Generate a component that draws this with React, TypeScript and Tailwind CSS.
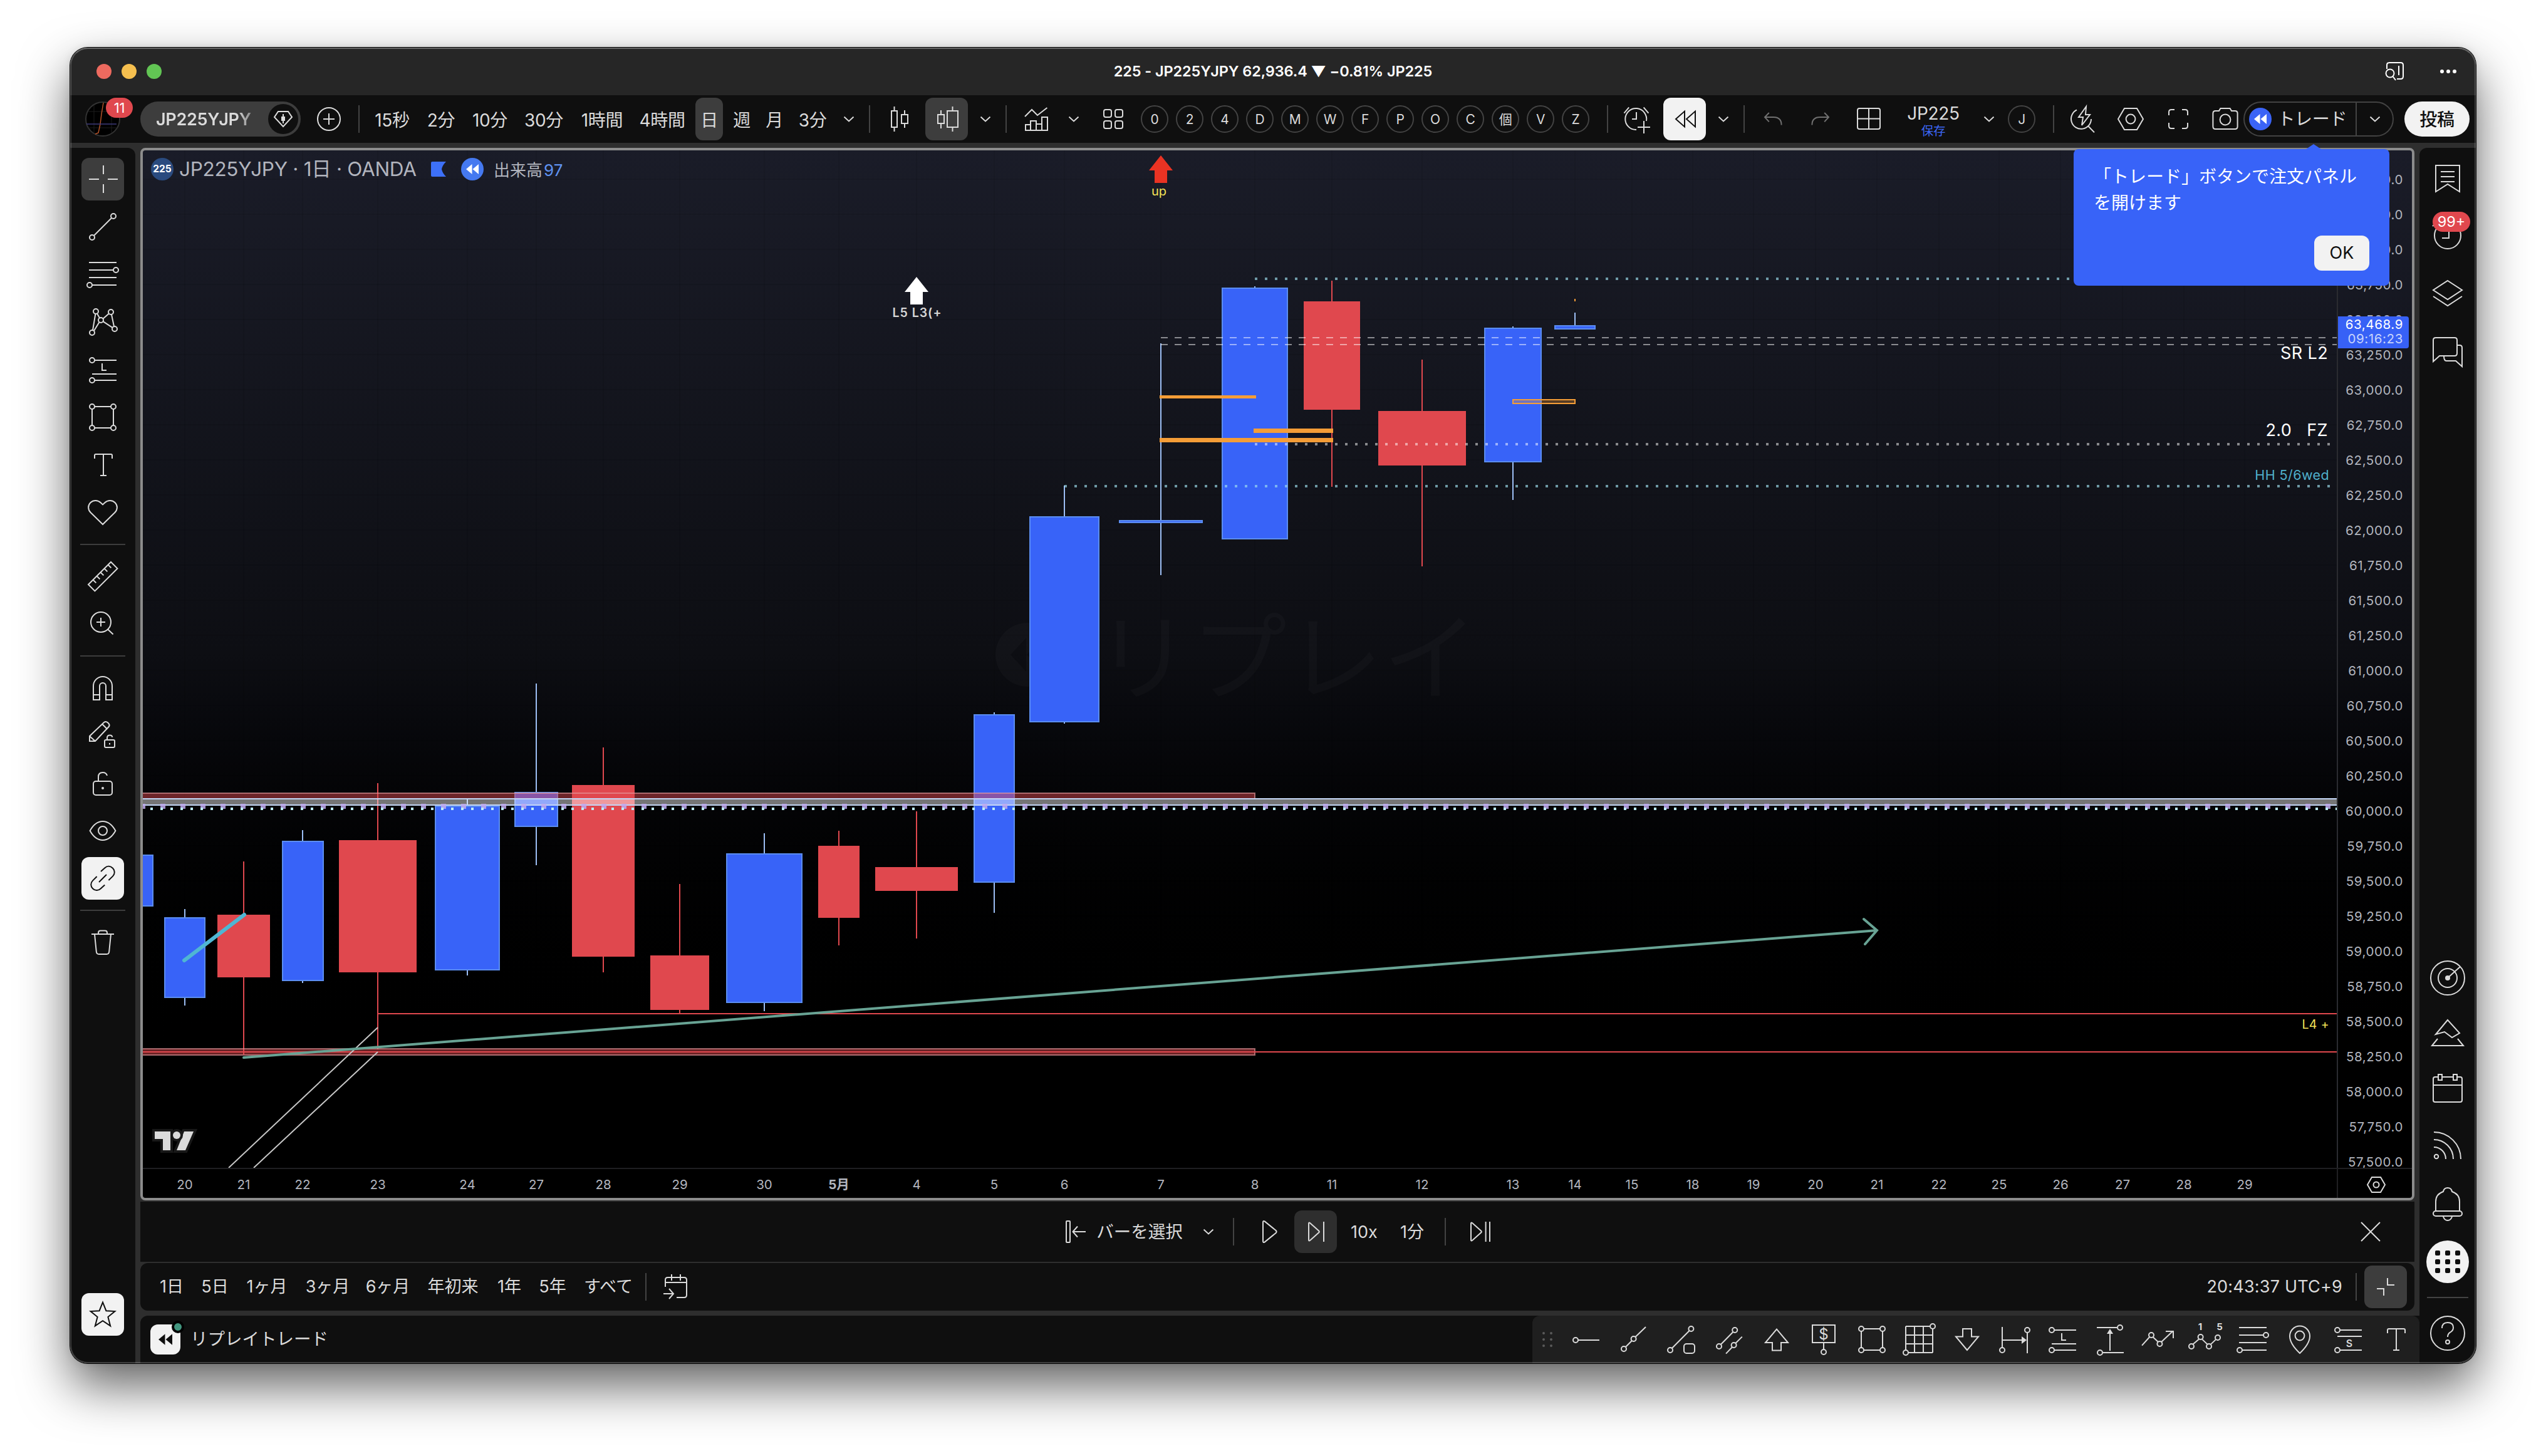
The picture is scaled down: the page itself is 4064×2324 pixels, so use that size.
import type { ReactNode } from "react";
import clsx from "clsx";

type IconProps = { children: ReactNode; className?: string };

// All tool icons share a 28x28 grid with a one-unit stroke
function Icon({ children, className }: IconProps) {
  return (
    <svg
      viewBox="0 0 28 28"
      fill="none"
      stroke="currentColor"
      strokeWidth="1"
      className={clsx("size-14 shrink-0 overflow-visible", className)}
    >
      {children}
    </svg>
  );
}

const Dot = ({ x, y, r = 2 }: { x: number; y: number; r?: number }) => (
  <circle cx={x} cy={y} r={r} />
);

/* ---------- icons ---------- */

const CrossIcon = () => (
  <Icon>
    <path d="M14.500 3v7M14.500 18v7M3 14h8M18 14h8" />
  </Icon>
);
const TrendIcon = () => (
  <Icon>
    <Dot x={5.5} y={22.5} />
    <Dot x={22.5} y={5.5} />
    <path d="M7 21L21 7" />
  </Icon>
);
const FibIcon = () => (
  <Icon>
    <path d="M3 4.500h22M3 10.500h19.500M3 16.500h22M5.500 22.500H25" />
    <Dot x={24.5} y={10.5} />
    <Dot x={3.5} y={22.5} />
  </Icon>
);
const PatternIcon = () => (
  <Icon>
    <Dot x={5.5} y={22.5} />
    <Dot x={8.5} y={5.5} />
    <Dot x={12.5} y={12.5} />
    <Dot x={20.5} y={6} />
    <Dot x={23.5} y={19.5} />
    <path d="M6 20.500L8.200 7.500M9.500 7.300l2 3.400M7 21l4.300-7M14.200 11.400l4.600-4M14.300 13.600l7.400 4.800M21 8l2 9.500" />
  </Icon>
);
const LongPositionIcon = () => (
  <Icon>
    <Dot x={5.5} y={6.5} />
    <Dot x={5.5} y={22.5} />
    <path d="M7.500 6.500H25M7.500 22.500H25M5.500 17.500H25M13.500 9v5.500H17" />
  </Icon>
);
const RectIcon = () => (
  <Icon>
    <Dot x={5.5} y={5.5} />
    <Dot x={22.5} y={5.5} />
    <Dot x={5.5} y={22.5} />
    <Dot x={22.5} y={22.5} />
    <path d="M7.500 5.500h13M7.500 22.500h13M5.500 7.500v13M22.500 7.500v13" />
  </Icon>
);
const TextIcon = () => (
  <Icon>
    <path d="M7.500 9V6.500q0-1 1-1h12q1 0 1 1V9M14.500 5.500v17M12 22.500h5" />
  </Icon>
);
const HeartIcon = () => (
  <Icon>
    <path d="M14 23.500L4.300 14C2 11.600 2 8.300 4.200 6.100C6.600 3.900 10 4 12.300 6.100L14 7.700l1.700-1.600C18 4 21.400 3.900 23.800 6.100C26 8.300 26 11.600 23.700 14z" />
  </Icon>
);
const RulerIcon = () => (
  <Icon>
    <path d="M2.500 20.500L20.500 2.500l5.200 5.200l-18 18zM6.500 17l2.200 2.200M9.500 14l2.200 2.200M12.500 11l2.200 2.200M15.500 8l2.200 2.200M18.500 5l2.200 2.200" />
  </Icon>
);
const ZoomIcon = () => (
  <Icon>
    <circle cx="12.500" cy="12.500" r="8" />
    <path d="M12.500 9v7M9 12.500h7M18 18.200l4.300 4" />
  </Icon>
);
const MagnetIcon = () => (
  <Icon>
    <path d="M6.500 23.500V12.500a7.500 7.500 0 0 1 15 0v11h-5V12.500a2.500 2.500 0 0 0-5 0v11zM6.500 19.500h5M16.500 19.500h5" />
  </Icon>
);
const PencilLockIcon = () => (
  <Icon>
    <path d="M3.500 18.500v-4L15 3.500q1.500-1 3 .2l.8.8q1 1.300 0 2.500L8 18.500zM3.500 14.500l4.500 4M13.700 5l4 4" />
    <rect x="15.500" y="17.500" width="8" height="6" rx="1" />
    <path d="M17.500 17.500v-1.500q0-2.200 2.200-2.200q1.700 0 2 1.500M19.500 20v1.200" />
  </Icon>
);
const LockIcon = () => (
  <Icon>
    <rect x="6.500" y="12.500" width="15" height="11" rx="2" />
    <path d="M10.500 12.500V9q0-3.500 3.500-3.500q2.800 0 3.500 2.500" />
    <circle cx="14" cy="18" r="1" fill="currentColor" stroke="none" />
  </Icon>
);
const EyeIcon = () => (
  <Icon>
    <path d="M3.800 14Q8 6.500 14 6.500T24.200 14Q20 21.500 14 21.500T3.800 14z" />
    <circle cx="14" cy="14" r="3.500" />
  </Icon>
);
const LinkIcon = () => (
  <Icon>
    <path d="M12.500 8.500L15.700 5.600c2-1.800 4.500-1.500 6.300.3s1.900 4.500 0 6.400l-3.300 3.200M9.300 12.500L6 15.800c-1.900 1.900-1.800 4.500 0 6.300s4.400 2 6.300.2l3.300-3.100M11 17l6-6" />
  </Icon>
);
const TrashIcon = () => (
  <Icon>
    <path d="M5 7.500h18M10.500 7.500v-1q0-1.700 1.700-1.700h3.600q1.700 0 1.700 1.700v1M7.500 7.500l1.400 14q.2 2 2 2h6.200q1.800 0 2-2l1.400-14" />
  </Icon>
);
const StarIcon = () => (
  <Icon>
    <path d="M14 4.300l2.700 6.800 7 .4-5.500 4.500 1.900 7.200L14 19.100l-6.100 4.100 1.900-7.200-5.500-4.500 7-.4z" />
  </Icon>
);
const Chevron = ({ className }: { className?: string }) => (
  <div className={clsx("flex shrink-0 justify-center text-[#dbdbdb]", className)}>
    <svg viewBox="0 0 16 8" fill="none" stroke="currentColor" strokeWidth="2" className="h-2 w-4 overflow-visible">
      <path d="M0.500 0.500L8 7.500L15.500 0.500" />
    </svg>
  </div>
);
const Rewind = ({ className }: { className?: string }) => (
  <svg viewBox="0 0 20 16" fill="currentColor" className={className}>
    <path d="M9.500 0v16L0 8zM20 0v16L10.500 8z" />
  </svg>
);
const HexIcon = ({ className }: { className?: string }) => (
  <Icon className={className}>
    <path d="M9 5.500h10L24 14l-5 8.500H9L4 14z" />
    <circle cx="14" cy="14" r="3.700" />
  </Icon>
);

/* ---------- shared bits ---------- */

const Sep = ({ className }: { className?: string }) => (
  <div className={clsx("h-11 w-0.5 shrink-0 bg-[#434343]", className)} />
);
const Cell = ({ children, className }: { children: ReactNode; className: string }) => (
  <div className={clsx("flex shrink-0 items-center justify-center whitespace-nowrap", className)}>
    {children}
  </div>
);

/* ---------- title bar ---------- */

function TitleBar() {
  return (
    <div className="flex h-[76px] shrink-0 items-center bg-[#262626] text-white">
      <div className="flex w-[400px] items-center gap-4 pl-[42px]">
        <span className="size-6 rounded-full bg-[#ed6a5f]" />
        <span className="size-6 rounded-full bg-[#f5bf4f]" />
        <span className="size-6 rounded-full bg-[#62c554]" />
      </div>
      <div className="flex-1 text-center text-[23.500px] font-semibold tracking-[-0.1px]">
        225 - JP225YJPY 62,936.4 ▼ −0.81% JP225
      </div>
      <div className="flex w-[400px] items-center justify-end pr-[31px]">
        <svg viewBox="0 0 30 30" fill="none" stroke="currentColor" strokeWidth="2" className="mr-[58px] size-[30px] overflow-visible">
          <path d="M3 11V5q0-4 4-4h18q4 0 4 4v18q0 4-4 4h-6M22 6v15" />
          <circle cx="8" cy="18" r="6.500" />
          <path d="M12.500 23l4.500 6" />
        </svg>
        <div className="flex gap-1">
          <span className="size-1.5 rounded-full bg-white" />
          <span className="size-1.5 rounded-full bg-white" />
          <span className="size-1.5 rounded-full bg-white" />
        </div>
      </div>
    </div>
  );
}

/* ---------- top toolbar ---------- */

const layouts = ["0", "2", "4", "D", "M", "W", "F", "P", "O", "C", "個", "V", "Z"];

function CircleLetter({ label }: { label: string }) {
  return (
    <div className="flex size-11 shrink-0 items-center justify-center rounded-full border-2 border-[#434343] pt-0.5 text-[21px]">
      {label}
    </div>
  );
}

function TopToolbar() {
  return (
    <div className="flex h-[76px] shrink-0 items-center bg-[#0f0f0f] text-[28px] tracking-[-0.3px] text-[#dbdbdb]">
      <div className="relative ml-6 size-14 shrink-0">
        <svg viewBox="0 0 56 56" className="size-14">
          <circle cx="28" cy="28" r="27" fill="#000" stroke="#333" strokeWidth="2" />
          <path d="M14 6v44M42 6v44M5 16h46M5 42h46" stroke="#1c1c1c" strokeWidth="1" />
          <path d="M29 2l-3 18l-2 16l-3 14l-5 2" stroke="#b4532a" strokeWidth="1.500" fill="none" />
          <path d="M2 36h48" stroke="#3d3a7a" strokeWidth="1.500" />
        </svg>
        <div className="absolute -top-1.5 left-[33px] flex h-8 w-[43px] items-center justify-center rounded-full bg-[#e0484e] text-[22px] text-white">
          11
        </div>
      </div>
      <div className="ml-8 flex h-14 w-64 shrink-0 items-center justify-between rounded-full bg-[#3d3d3d] pr-1 pl-[25px]">
        <span className="bg-gradient-to-r from-[#dbdbdb] from-85% to-[#8a8a8a] bg-clip-text pt-0.5 text-[27px] font-semibold text-transparent">
          JP225YJPY
        </span>
        <span className="flex size-12 items-center justify-center rounded-full bg-[#0f0f0f]">
          <svg viewBox="0 0 32 32" fill="none" stroke="currentColor" strokeWidth="2" className="size-8">
            <path d="M8 4h16l6 9l-14 15L2 13z" />
            <path d="M16 8v15" />
            <path d="M13 12h6v7h-6z" fill="currentColor" stroke="none" />
          </svg>
        </span>
      </div>
      <Cell className="w-[90px]">
        <Icon>
          <circle cx="14" cy="14" r="9" />
          <path d="M14 9.500v9M9.500 14h9" />
        </Icon>
      </Cell>
      <Sep className="ml-0.5" />
      <Cell className="ml-[11px] w-[82px] pt-[3px]">15秒</Cell>
      <Cell className="w-[74px] pt-[3px]">2分</Cell>
      <Cell className="w-[82px] pt-[3px]">10分</Cell>
      <Cell className="w-[90px] pt-[3px]">30分</Cell>
      <Cell className="w-24 pt-[3px]">1時間</Cell>
      <Cell className="w-24 pt-[3px]">4時間</Cell>
      <Cell className="ml-[5px] h-[68px] w-11 rounded-xl bg-[#3d3d3d] pt-[3px]">日</Cell>
      <Cell className="ml-1 w-[52px] pt-[3px]">週</Cell>
      <Cell className="w-[52px] pt-[3px]">月</Cell>
      <Cell className="w-[70px] pt-[3px]">3分</Cell>
      <Chevron className="w-[46px]" />
      <Sep className="ml-[9px]" />
      <Cell className="ml-1.5 w-[82px]">
        <Icon>
          <path d="M7.500 7.500h4.500v13H7.500zM9.750 4v3.500M9.750 20.500V24M15.500 10.500h5v7h-5zM18 7v3.500M18 17.500V21" />
        </Icon>
      </Cell>
      <Cell className="h-[68px] w-[68px] rounded-xl bg-[#3d3d3d]">
        <Icon>
          <path d="M7 10.500h5v7H7zM9.500 7v3.500M9.500 17.500v4M14.500 7.500h8.500v13h-8.500zM18.750 4v3.500M18.750 20.500V24" />
        </Icon>
      </Cell>
      <Chevron className="w-14" />
      <Sep className="ml-1" />
      <Cell className="w-[94px]">
        <Icon>
          <path d="M5 12L10.500 6.500L15 11L22.700 5M5.500 23v-4.500H9.500V23M9.500 18.500v-3h4.500V23M14 18h4.500V23M18.500 18v-5.500H23V23M5 23h18.500" />
        </Icon>
      </Cell>
      <Chevron className="w-[26px]" />
      <Cell className="ml-1.5 w-[88px]">
        <Icon>
          <rect x="6.500" y="6.500" width="6" height="6" rx="1.500" />
          <rect x="15.500" y="6.500" width="6" height="6" rx="1.500" />
          <rect x="6.500" y="15.500" width="6" height="6" rx="1.500" />
          <rect x="15.500" y="15.500" width="6" height="6" rx="1.500" />
        </Icon>
      </Cell>
      <div className="flex shrink-0 gap-3">
        {layouts.map((label) => (
          <CircleLetter key={label} label={label} />
        ))}
      </div>
      <Sep className="ml-7" />
      <Cell className="ml-1 w-[84px]">
        <Icon>
          <path d="M21.500 15.500a8.500 8.500 0 1 0-8 7M13.500 8.500V14H10M3.700 9.300L7.600 4.700M23.200 9.300L19.300 4.700M19.500 15.500v10M14.500 20.500h10" />
        </Icon>
      </Cell>
      <Cell className="h-[68px] w-[68px] rounded-xl bg-[#f2f2f2] text-[#0f0f0f]">
        <Icon>
          <path d="M7 14L14 7.800v12.400zM15.500 14L22.500 7.800v12.400z" />
        </Icon>
      </Cell>
      <Chevron className="w-[55px]" />
      <Sep className="ml-[5px]" />
      <Cell className="ml-[7px] w-[76px] text-[#707070]">
        <Icon>
          <path d="M10.900 9L7.500 12.500l3.400 3.700M7.500 12.500h7q6.300 0 6.300 6.300" />
        </Icon>
      </Cell>
      <Cell className="w-[76px] text-[#707070]">
        <Icon>
          <path d="M17.100 9l3.400 3.500l-3.400 3.700M20.500 12.500h-7q-6.300 0-6.300 6.300" />
        </Icon>
      </Cell>
      <Cell className="w-[78px]">
        <Icon>
          <rect x="5" y="5.500" width="18" height="16.500" rx="1.500" />
          <path d="M14 5.500V22M5 13.800h18" />
        </Icon>
      </Cell>
      <div className="flex w-32 shrink-0 flex-col items-center gap-1 pt-1.5">
        <span className="leading-7">JP225</span>
        <span className="text-[19.500px] leading-5 text-[#3c66f5]">保存</span>
      </div>
      <Chevron className="w-[50px]" />
      <div className="ml-[5px]">
        <CircleLetter label="J" />
      </div>
      <Sep className="ml-7" />
      <Cell className="ml-2 w-[76px]">
        <Icon>
          <path d="M9 6.700A8 8 0 1 0 20.500 14M18 19.500l5 5.200M16.500 4L10.500 12.500h3.500L13 19L19.500 10.500H16z" />
        </Icon>
      </Cell>
      <Cell className="w-[76px]">
        <HexIcon />
      </Cell>
      <Cell className="w-[76px]">
        <Icon>
          <path d="M6.500 11V8.500q0-2 2-2H11M17 6.500h2.500q2 0 2 2V11M21.500 17v2.500q0 2-2 2H17M11 21.500H8.500q-2 0-2-2V17" />
        </Icon>
      </Cell>
      <Cell className="ml-2 w-[58px]">
        <Icon>
          <path d="M4.200 9.500q0-2 2-2H9l1.200-2h7.600l1.200 2h2.800q2 0 2 2v10.500q0 2-2 2H6.200q-2 0-2-2z" />
          <circle cx="14" cy="14.500" r="4.200" />
        </Icon>
      </Cell>
      <div className="flex h-14 w-60 shrink-0 items-center rounded-full border-2 border-[#434343] pl-[7px]">
        <span className="flex size-9 items-center justify-center rounded-full bg-[#3b64f6] text-white">
          <Rewind className="h-4 w-5" />
        </span>
        <span className="w-[136px] pr-1 text-center whitespace-nowrap">トレード</span>
        <span className="h-[52px] w-0.5 shrink-0 bg-[#434343]" />
        <Chevron className="w-[57px]" />
      </div>
      <Cell className="ml-[17px] h-14 w-[104px] rounded-full bg-[#f2f2f2] pt-0.5 font-medium text-[#0f0f0f]">投稿</Cell>
    </div>
  );
}

/* ---------- side toolbars ---------- */

function LeftToolbar() {
  const row = "h-[76px] w-[104px]";
  const line = "mx-auto my-[12px] h-0.5 w-[72px] shrink-0 bg-[#3d3d3d]";
  return (
    <div className="flex w-[104px] shrink-0 flex-col rounded-tr-xl bg-[#0f0f0f] pt-4 text-[#dbdbdb]">
      <Cell className="mx-auto mb-1 size-[68px] rounded-xl bg-[#3d3d3d]">
        <CrossIcon />
      </Cell>
      <Cell className={row}><TrendIcon /></Cell>
      <Cell className={row}><FibIcon /></Cell>
      <Cell className={row}><PatternIcon /></Cell>
      <Cell className={row}><LongPositionIcon /></Cell>
      <Cell className={row}><RectIcon /></Cell>
      <Cell className={row}><TextIcon /></Cell>
      <Cell className={row}><HeartIcon /></Cell>
      <div className={line} />
      <Cell className={row}><RulerIcon /></Cell>
      <Cell className={row}><ZoomIcon /></Cell>
      <div className={line} />
      <Cell className={row}><MagnetIcon /></Cell>
      <Cell className={row}><PencilLockIcon /></Cell>
      <Cell className={row}><LockIcon /></Cell>
      <Cell className={row}><EyeIcon /></Cell>
      <Cell className="mx-auto my-1 size-[68px] rounded-xl bg-[#f2f2f2] text-[#0f0f0f]">
        <LinkIcon />
      </Cell>
      <div className={line} />
      <Cell className={row}><TrashIcon /></Cell>
      <Cell className="mx-auto mt-auto mb-11 size-[68px] rounded-xl bg-[#f2f2f2] text-[#0f0f0f]">
        <StarIcon />
      </Cell>
    </div>
  );
}

function RightToolbar() {
  return (
    <div className="flex w-[90px] shrink-0 flex-col items-center rounded-tl-xl bg-[#0f0f0f] text-[#dbdbdb]">
      <Icon className="mt-[21px]">
        <path d="M4.500 3.500h19v21L14 18.500L4.500 24.500zM8.500 8.500h11M8.500 12.500h11M8.500 16.500h11" />
      </Icon>
      <div className="relative mt-[33px] size-14">
        <Icon>
          <circle cx="14" cy="15" r="10.500" />
          <path d="M15 10v7H9.500M2 7.500L6.500 3" />
        </Icon>
        <div className="absolute -top-2 left-1 flex h-8 w-[60px] items-center justify-center rounded-full bg-[#e0484e] text-[23.500px] text-white">
          99+
        </div>
      </div>
      <Icon className="mt-[38px]">
        <path d="M14 4L25.500 11.500L14 19L2.500 11.500zM2.500 16.500L14 24l11.500-7.500" />
      </Icon>
      <Icon className="mt-9">
        <path d="M4.500 3.500h15q2 0 2 2v10.500q0 2-2 2H7.500L2.500 22.500V5.500q0-2 2-2zM21.500 9.500h2q2 0 2 2V26.500l-5-4.500H13q-2 0-2-4" />
      </Icon>
      <div className="flex-1" />
      <Icon>
        <circle cx="14" cy="14" r="13.500" />
        <circle cx="14" cy="14" r="7.500" />
        <circle cx="14" cy="14" r="2" fill="currentColor" stroke="none" />
        <path d="M14 14l10-9" />
      </Icon>
      <Icon className="mt-[33px]">
        <path d="M14 3L4.500 14.500l7-2l6 4.500l6-3.500zM6 18L1.500 23.500h25L22 18" />
      </Icon>
      <Icon className="mt-8">
        <path d="M6 4.500H4q-1.500 0-1.500 1.500v17q0 1.500 1.500 1.500h20q1.500 0 1.500-1.500V6q0-1.500-1.500-1.500h-2M10 4.500h8M2.500 11h23M6.500 2.500h3v4.500h-3zM18.500 2.500h3v4.500h-3z" />
      </Icon>
      <Icon className="mt-[34px]">
        <circle cx="5" cy="23" r="1.600" />
        <path d="M3 3.500A21.500 21.500 0 0 1 24.500 25M3 9.500A15.500 15.500 0 0 1 18.500 25M3 15.500A9.500 9.500 0 0 1 12.500 25" />
      </Icon>
      <Icon className="mt-[37px]">
        <path d="M4.500 20V12.500q0-6 6-8q.5-3 3.500-3t3.500 3q6 2 6 8V20" />
        <rect x="2.500" y="20" width="23" height="4" rx="2" />
        <path d="M10.500 24.500q1 3 3.500 3t3.500-3" />
      </Icon>
      <div className="mt-[31px] grid size-[68px] grid-cols-3 content-center justify-center gap-x-1.5 gap-y-1.5 rounded-full bg-[#f2f2f2] px-[13px]">
        {Array.from({ length: 9 }, (_, i) => (
          <span key={i} className="size-2 justify-self-center rounded-xs bg-[#0f0f0f]" />
        ))}
      </div>
      <div className="mt-[22px] h-0.5 w-[66px] bg-[#434343]" />
      <Icon className="mt-7 mb-5">
        <circle cx="14" cy="14" r="13.500" />
        <path d="M9.500 10q0-4.500 4.500-4.500t4.500 4q0 2.500-2.500 3.800q-2 1.200-2 3.700" />
        <circle cx="14" cy="21" r="1.500" />
      </Icon>
    </div>
  );
}

/* ---------- chart ---------- */

// left, right, top, bottom, wick x, high, low
type Candle = [number, number, number, number, number, number, number];

const upCandles: Candle[] = [
  [200, 245, 1364, 1447, 220, 1364, 1447],
  [262, 328, 1464, 1593, 295, 1451, 1605],
  [450, 517, 1342, 1566, 483, 1325, 1569],
  [694, 798, 1286, 1549, 746, 1276, 1557],
  [821, 891, 1264, 1320, 856, 1091, 1381],
  [1159, 1281, 1362, 1601, 1220, 1330, 1614],
  [1554, 1620, 1140, 1409, 1587, 1137, 1457],
  [1643, 1755, 824, 1153, 1699, 775, 1155],
  [1786, 1920, 830, 835, 1853, 548, 918],
  [1950, 2056, 459, 861, 2003, 457, 861],
  [2369, 2461, 523, 738, 2415, 521, 798],
  [2481, 2547, 519, 526, 2514, 499, 526],
];

const downCandles: Candle[] = [
  [347, 431, 1460, 1560, 389, 1375, 1683],
  [541, 665, 1341, 1552, 603, 1250, 1675],
  [913, 1013, 1253, 1527, 963, 1193, 1552],
  [1038, 1132, 1525, 1612, 1085, 1411, 1617],
  [1306, 1372, 1350, 1465, 1339, 1326, 1509],
  [1397, 1529, 1384, 1422, 1463, 1295, 1498],
  [2081, 2171, 481, 654, 2126, 448, 777],
  [2200, 2340, 656, 743, 2270, 574, 904],
];

const timeLabels: [string, number][] = [
  ["20", 295], ["21", 389], ["22", 483], ["23", 603], ["24", 746], ["27", 856],
  ["28", 963], ["29", 1085], ["30", 1220], ["5月", 1339], ["4", 1463], ["5", 1587],
  ["6", 1699], ["7", 1853], ["8", 2003], ["11", 2126], ["12", 2270], ["13", 2415],
  ["14", 2514], ["15", 2605], ["18", 2702], ["19", 2799], ["20", 2898], ["21", 2996],
  ["22", 3095], ["25", 3191], ["26", 3289], ["27", 3388], ["28", 3486], ["29", 3583],
];

const prices = Array.from({ length: 29 }, (_, i) => 64500 - i * 250);
const formatPrice = (p: number) => `${p.toLocaleString("en-US")}.0`;

function ChartPane() {
  return (
    <svg viewBox="228 240 3502 1624" className="h-[1624px] w-[3502px]">
      {timeLabels.map(([, x]) => (
        <path key={x} d={`M${x} 240V1864`} stroke="#000" strokeOpacity="0.07" strokeWidth="2" />
      ))}
      {prices.map((p, i) => (
        <path key={p} d={`M228 ${286 + i * 56}H3730`} stroke="#000" strokeOpacity="0.07" strokeWidth="2" />
      ))}

      {/* watermark */}
      <g fill="#fff" fillOpacity="0.024">
        <path
          fillRule="evenodd"
          d="M1640 994a51 51 0 1 0 0.100 0zM1638 1018v54l-25-27zM1664 1018v54l-25-27z"
        />
        <text x="1748" y="1106" fontSize="153" fontWeight="400">リプレイ</text>
      </g>

      {upCandles.map(([l, r, t, b, x, hi, lo]) => (
        <g key={l}>
          <path d={`M${x} ${hi}V${t}M${x} ${b}V${lo}`} stroke="#9dbff5" strokeWidth="2" />
          <rect x={l + 1} y={t + 1} width={r - l - 2} height={b - t - 2} fill="#3863f8" stroke="#5b8df0" strokeWidth="2" />
        </g>
      ))}
      {downCandles.map(([l, r, t, b, x, hi, lo]) => (
        <g key={l}>
          <path d={`M${x} ${hi}V${lo}`} stroke="#e0484e" strokeWidth="2" />
          <rect x={l} y={t} width={r - l} height={b - t} fill="#e0484e" />
        </g>
      ))}

      {/* support and resistance lines */}
      <g strokeWidth="4" strokeDasharray="4 12">
        <path d="M2003 445H3720" stroke="#9fe0f0" strokeOpacity="0.65" />
        <path d="M1699 776H3720" stroke="#9fe0f0" strokeOpacity="0.65" />
        <path d="M2003 709H3720" stroke="#fff" strokeOpacity="0.5" />
      </g>
      <path d="M1853 539H3730M1853 550H3730" stroke="#fff" strokeOpacity="0.5" strokeWidth="2" strokeDasharray="11 11" />

      <path d="M1851 633.500H2005" stroke="#f49d37" strokeWidth="5" />
      <path d="M2001 687.500H2128M1851 702.500H2128" stroke="#f49d37" strokeWidth="7" />
      <rect x="2415" y="638" width="99" height="6" fill="#f49d37" fillOpacity="0.3" stroke="#f49d37" strokeWidth="2" />
      <path d="M2514 477v4" stroke="#f49d37" strokeWidth="2" />

      {/* 60,000 zone */}
      <rect x="200" y="1266" width="1803" height="9" fill="#e0484e" fillOpacity="0.48" stroke="#e79a9d" strokeOpacity="0.65" strokeWidth="2" />
      <rect x="200" y="1275" width="3560" height="10" fill="#fff" fillOpacity="0.45" stroke="#c4d6f5" strokeWidth="2" />
      <path d="M224 1287H3730" stroke="#c0a9ee" strokeOpacity="0.85" strokeWidth="8" strokeDasharray="8 24" />
      <path d="M224 1291H3730" stroke="#bdeefa" strokeWidth="4" strokeDasharray="4 12" />

      {/* 58,250 zone */}
      <path d="M603 1618H3730" stroke="#e0484e" strokeWidth="2" />
      <rect x="200" y="1674" width="1803" height="10" fill="#e0484e" fillOpacity="0.48" stroke="#e79a9d" strokeOpacity="0.65" strokeWidth="2" />
      <path d="M228 1679H3730" stroke="#e0484e" strokeWidth="2" />

      <path d="M603 1640L365 1864M603 1679L405 1864" stroke="#c8c8c8" strokeWidth="2" />
      <path d="M389 1688L2996 1485M2975 1467L2996 1485L2977 1507" fill="none" stroke="#68a394" strokeWidth="4" strokeLinecap="round" />
      <path d="M294 1533L390 1460" stroke="#4fb6d3" strokeWidth="6" strokeLinecap="round" />

      {/* arrow marks */}
      <path d="M1853 248l19 24h-9v20h-20v-20h-9z" fill="#ea3323" />
      <path d="M1463 442l19 24h-9v20h-20v-20h-9z" fill="#fff" />
      <text x="1850" y="312" fontSize="20" textAnchor="middle" fill="#f5e356">up</text>
      <text x="1464" y="506" fontSize="19.500" fontWeight="600" letterSpacing="1" textAnchor="middle" fill="#d6d6d6">L5 L3(+</text>

      <g textAnchor="end">
        <text x="3716" y="573" fontSize="27" letterSpacing="0.400" fill="#fff">SR L2</text>
        <text x="3716" y="696" fontSize="27" letterSpacing="0.400" fill="#fff" xmlSpace="preserve">2.0   FZ</text>
        <text x="3718" y="766" fontSize="21.500" letterSpacing="0.400" fill="#4fb0cc">HH 5/6wed</text>
        <text x="3718" y="1642" fontSize="19.500" letterSpacing="0.400" fill="#f5e356">L4 +</text>
      </g>

      <g fill="#dbdbdb" stroke="#181818" strokeWidth="8" paintOrder="stroke">
        <path d="M247 1806h25v30h-12v-18h-13zM294 1806h15l-13 30h-14z" />
        <circle cx="282" cy="1812" r="6" />
      </g>
    </svg>
  );
}

function TimeAxis() {
  return (
    <svg viewBox="228 1866 3502 46" className="h-[46px] w-[3502px]" fill="#b2b5be" fontSize="20.500" textAnchor="middle">
      {timeLabels.map(([label, x]) => (
        <text key={x} x={x} y="1897.500" fontWeight={label.endsWith("月") ? 700 : 400}>
          {label}
        </text>
      ))}
    </svg>
  );
}

function Legend() {
  return (
    <div className="absolute top-3 left-[13px] flex h-9 items-center text-[#b2b5be]">
      <span className="flex size-9 items-center justify-center rounded-full bg-[#2a4b7f] text-[15.500px] font-bold text-white">
        225
      </span>
      <span className="ml-[9px] w-[402px] text-[31.500px] tracking-[-0.3px] whitespace-nowrap">JP225YJPY · 1日 · OANDA</span>
      <svg viewBox="0 0 24 24" className="size-6 shrink-0" fill="#3d70f7">
        <path d="M2 0H24Q18 6 17 12Q18 18 24 24H2Q0 24 0 22V2Q0 0 2 0z" />
      </svg>
      <span className="ml-6 flex size-9 shrink-0 items-center justify-center rounded-full bg-[#4579f0] text-white">
        <Rewind className="h-4 w-5" />
      </span>
      <span className="ml-4 pt-0.5 text-[26px] whitespace-nowrap">
        出来高<span className="ml-0.5 text-[#5f92f0]">97</span>
      </span>
    </div>
  );
}

function Chart() {
  return (
    <div className="h-[1680px] shrink-0 rounded-lg border-4 border-[#8c8c8c] bg-linear-to-b from-[#1a1c28] via-[#0d0e13] via-48% to-black to-88%">
      <div className="flex h-[1624px]">
        <div className="relative">
          <ChartPane />
          <Legend />
        </div>
        <div className="w-0.5 bg-[#2a2b30]" />
        <div className="relative w-[118px] overflow-hidden pt-[19px] text-[20.500px] tracking-[0.6px] text-[#b2b5be]">
          {prices.map((p) => (
            <div key={p} className="flex h-14 items-center justify-end pr-[14px]">
              {formatPrice(p)}
            </div>
          ))}
          <div className="absolute top-[265px] left-0 flex h-[51px] w-[113px] flex-col justify-start rounded-r bg-[#3761f6] pt-px pr-[9px] text-right leading-[23px] text-white">
            <span>63,468.9</span>
            <span className="text-[#c8d4fc]">09:16:23</span>
          </div>
        </div>
      </div>
      <div className="h-0.5 bg-[#1f1f22]" />
      <div className="flex h-[46px]">
        <TimeAxis />
        <div className="w-0.5 bg-[#1f1f22]" />
        <div className="flex flex-1 items-center justify-center pl-1 text-[#dbdbdb]">
          <svg viewBox="0 0 30 26" fill="none" stroke="currentColor" strokeWidth="2" className="mt-1 h-[26px] w-[30px]">
            <path d="M8 1h14l7 12l-7 12H8L1 13z" />
            <circle cx="15" cy="13" r="4.500" />
          </svg>
        </div>
      </div>
    </div>
  );
}

/* ---------- bottom bars ---------- */

function ReplayBar() {
  return (
    <div className="mt-0.5 flex h-24 shrink-0 items-center bg-[#0f0f0f] text-[27px] text-[#dbdbdb]">
      <svg viewBox="0 0 34 36" fill="none" stroke="currentColor" strokeWidth="2" className="ml-[1476px] h-9 w-[34px] shrink-0">
        <rect x="2" y="1" width="6" height="34" rx="1" />
        <path d="M33 18H13M20 9.500L12.500 18L20 26.500" />
      </svg>
      <span className="ml-3.5 w-[142px] pt-0.5 text-center text-[27.500px] whitespace-nowrap">バーを選択</span>
      <Chevron className="ml-2 w-[62px]" />
      <Sep className="ml-2" />
      <Cell className="ml-[18px] w-[78px]">
        <Icon>
          <path d="M8.500 6.500q0-1.500 1.300-.8l9 7.300q1 1 0 2l-9 7.300q-1.300.7-1.300-.8z" />
        </Icon>
      </Cell>
      <Cell className="size-[68px] rounded-xl bg-[#2e2e2e]">
        <Icon>
          <path d="M8.500 7.500q0-1.200 1-.5l7 6.200q.8.800 0 1.600l-7 6.200q-1 .7-1-.5zM20.500 6v16" />
        </Icon>
      </Cell>
      <Cell className="w-[87px] pt-0.5">10x</Cell>
      <Cell className="w-[66px] pt-0.5">1分</Cell>
      <Sep className="ml-[19px]" />
      <Cell className="ml-4 w-[78px]">
        <Icon>
          <path d="M6.500 7.500q0-1.200 1-.5l7 6.200q.8.800 0 1.600l-7 6.200q-1 .7-1-.5zM18.300 6v16M21.500 6v16" />
        </Icon>
      </Cell>
      <Icon className="mr-[42px] ml-auto">
        <path d="M6.500 6.500l15 15M21.500 6.500l-15 15" />
      </Icon>
    </div>
  );
}

function RangeBar() {
  return (
    <div className="mt-0.5 flex h-[76px] shrink-0 items-center rounded-xl bg-[#0f0f0f] text-[27px] text-[#dbdbdb]">
      <Cell className="ml-[15px] w-[70px]">1日</Cell>
      <Cell className="w-[68px]">5日</Cell>
      <Cell className="w-[98px]">1ヶ月</Cell>
      <Cell className="w-[96px]">3ヶ月</Cell>
      <Cell className="w-[96px]">6ヶ月</Cell>
      <Cell className="w-[112px]">年初来</Cell>
      <Cell className="w-[68px]">1年</Cell>
      <Cell className="w-[70px]">5年</Cell>
      <Cell className="ml-1 w-[100px]">すべて</Cell>
      <Sep className="ml-[9px]" />
      <Cell className="ml-[9px] w-[76px]">
        <Icon>
          <path d="M5.500 14V8.500q0-2 2-2h13q2 0 2 2v12q0 2-2 2h-6M5.500 10.500h17M10.500 4v5M17.500 4v5M4 19.500h8M8.500 15.500l3.500 4l-3.500 4" />
        </Icon>
      </Cell>
      <span className="ml-auto text-right tracking-[0.2px] whitespace-nowrap">20:43:37 UTC+9</span>
      <Sep className="ml-[21px]" />
      <Cell className="mr-3 ml-3 size-[68px] rounded-xl bg-[#3d3d3d]">
        <Icon>
          <path d="M15.500 7v5.500H21M7 15.500h5.500V21" />
        </Icon>
      </Cell>
    </div>
  );
}

function DrawingToolbar() {
  const slot = "w-[76px]";
  return (
    <div className="flex w-[1416px] items-center rounded-t-xl bg-[#1f1f1f] text-[#dbdbdb]">
      <div className="ml-4 grid w-8 shrink-0 grid-cols-[4px_4px] gap-x-2 gap-y-1.5">
        {Array.from({ length: 6 }, (_, i) => (
          <span key={i} className="size-1 rounded-full bg-[#5a5a5a]" />
        ))}
      </div>
      <Cell className={slot}>
        <Icon>
          <Dot x={5.5} y={14.5} />
          <path d="M7.500 14.500h17" />
        </Icon>
      </Cell>
      <Cell className={slot}>
        <Icon>
          <Dot x={6} y={21.5} />
          <Dot x={13.8} y={13.5} />
          <path d="M7.400 20l5-5M15.200 12L23.500 4" />
        </Icon>
      </Cell>
      <Cell className={slot}>
        <Icon>
          <Dot x={5} y={22.5} />
          <Dot x={21.7} y={5.5} />
          <path d="M6.400 21L20.300 7" />
          <rect x="16" y="17.500" width="8.500" height="7.500" rx="2" />
        </Icon>
      </Cell>
      <Cell className={slot}>
        <Icon>
          <Dot x={6} y={19.5} />
          <Dot x={18.6} y={6.5} />
          <Dot x={17.8} y={18.5} />
          <path d="M7.400 18L17.200 8M11.500 25.300l5-5.200M19.200 17l5.200-5.200" />
        </Icon>
      </Cell>
      <Cell className={slot}>
        <Icon>
          <path d="M14 5.800l9 10.700h-5.500v6.200h-7v-6.200H5z" />
        </Icon>
      </Cell>
      <Cell className={slot}>
        <Icon>
          <path d="M4.500 2.500h18v14h-18zM13.500 16.500V22" />
          <Dot x={13.5} y={24} />
          <text x="13.500" y="13.800" fontSize="12" textAnchor="middle" fill="currentColor" stroke="none">$</text>
        </Icon>
      </Cell>
      <Cell className={slot}><RectIcon /></Cell>
      <Cell className={slot}>
        <Icon>
          <path d="M3 3.500h19.500M3 3.500v19M5 24.500h19.500M24.500 5.500v19M3 10.500h21.500M3 17.500h21.500M10 3.500v21M17 3.500v21" />
          <Dot x={24.5} y={3.5} />
          <Dot x={3} y={24.5} />
        </Icon>
      </Cell>
      <Cell className={slot}>
        <Icon>
          <path d="M14 22.500L5 11.700h5.500V5.500h7v6.200H23z" />
        </Icon>
      </Cell>
      <Cell className={slot}>
        <Icon>
          <path d="M4 4v16.500M24 8.500V25M4 14.500h18" />
          <path d="M19.500 11.500l4 3l-4 3z" fill="currentColor" stroke="none" />
          <Dot x={4} y={22.5} />
          <Dot x={24} y={6.5} />
        </Icon>
      </Cell>
      <Cell className={slot}><LongPositionIcon /></Cell>
      <Cell className={slot}>
        <Icon>
          <path d="M3.500 4.500h16M8.500 24.500h16.500M14 8v15" />
          <path d="M11.500 9.500L14 5.500l2.500 4z" fill="currentColor" stroke="none" />
          <Dot x={22} y={4.5} />
          <Dot x={6} y={24.5} />
        </Icon>
      </Cell>
      <Cell className={slot}>
        <Icon>
          <path d="M1.500 18.800L7.600 12M10.200 12l4.300 4M17 16L26 7.500M20.500 7.500h6V13" />
          <Dot x={9} y={10.5} />
          <Dot x={15.7} y={17.5} />
        </Icon>
      </Cell>
      <Cell className={slot}>
        <Icon>
          <path d="M4.300 17.800L9 13.800M11.500 13.800l4.200 4M18.500 17.800l4.200-4" />
          <Dot x={3} y={19.5} />
          <Dot x={10.3} y={12} />
          <Dot x={17} y={19.5} />
          <Dot x={24} y={12.5} />
          <g fontSize="7.500" fontWeight="700" textAnchor="middle" fill="currentColor" stroke="none">
            <text x="10" y="6.700">1</text>
            <text x="25.500" y="6.700">5</text>
          </g>
        </Icon>
      </Cell>
      <Cell className={slot}><FibIcon /></Cell>
      <Cell className={slot}>
        <Icon>
          <path d="M13.500 25Q5.500 17.500 5.500 11.300a8 8 0 0 1 16 0Q21.500 17.500 13.500 25z" />
          <circle cx="13.500" cy="11" r="3.700" />
        </Icon>
      </Cell>
      <Cell className={slot}>
        <Icon>
          <Dot x={5.5} y={6.5} />
          <Dot x={5.5} y={22.5} />
          <path d="M7.500 6.500H25M7.500 22.500H25M5.500 11.500H25" />
          <text x="15" y="20" fontSize="8" fontWeight="600" textAnchor="middle" fill="currentColor" stroke="none">S</text>
        </Icon>
      </Cell>
      <Cell className={slot}><TextIcon /></Cell>
    </div>
  );
}

function BottomPanel() {
  return (
    <div className="mt-2 flex h-[76px] shrink-0 justify-between rounded-tl-xl bg-[#0f0f0f]">
      <div className="flex items-center pl-4 text-[27.500px] text-[#dbdbdb]">
        <div className="relative flex size-12 items-center justify-center rounded-xl bg-[#f2f2f2] text-[#0f0f0f]">
          <Rewind className="h-5 w-[22px]" />
          <span className="absolute -top-1.5 -right-1.5 size-5 rounded-full border-4 border-black bg-[#42967f]" />
        </div>
        <span className="ml-4">リプレイトレード</span>
      </div>
      <DrawingToolbar />
    </div>
  );
}

function TradeHint() {
  return (
    <div className="absolute top-[162px] left-[3198px] h-[218px] w-[504px] rounded-lg bg-[#3863f8] px-8 pt-[23px] text-[28px] leading-[42px] text-white">
      <div className="absolute -top-2 left-[371px] h-2 w-6 bg-[#3863f8] [clip-path:polygon(50%_0,100%_100%,0_100%)]" />
      <p className="whitespace-nowrap">「トレード」ボタンで注文パネル</p>
      <p className="whitespace-nowrap">を開けます</p>
      <button className="absolute right-8 bottom-6 h-14 w-[88px] rounded-xl bg-[#f2f2f2] text-[27px] text-[#0f0f0f]">
        OK
      </button>
    </div>
  );
}

export default function App() {
  return (
    <div className="h-[2324px] w-[4064px] overflow-hidden bg-white pt-[76px] pl-28 font-['Inter','Noto_Sans_CJK_JP',sans-serif]">
      <div className="relative h-[2100px] w-[3840px] rounded-[28px] shadow-[0_0_0_1px_#000,0_36px_80px_rgba(0,0,0,0.62),0_0_14px_rgba(0,0,0,0.1)]">
        <div className="flex h-full flex-col overflow-hidden rounded-[28px] bg-[#2e2e2e]">
          <TitleBar />
          <TopToolbar />
          <div className="flex flex-1 pt-2">
            <LeftToolbar />
            <div className="flex w-[3646px] shrink-0 flex-col pl-2">
              <div className="flex w-[3630px] flex-col">
                <Chart />
                <ReplayBar />
                <RangeBar />
              </div>
              <BottomPanel />
            </div>
            <RightToolbar />
          </div>
        </div>
        <div className="pointer-events-none absolute inset-0 rounded-[28px] border-2 border-white/20 border-t-white/30" />
        <TradeHint />
      </div>
    </div>
  );
}
